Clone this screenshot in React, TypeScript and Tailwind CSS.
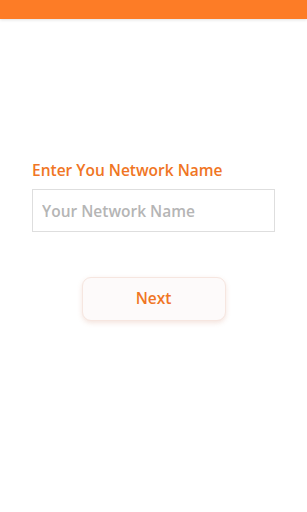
export default function App() {
  return (
    <div className="min-h-[512px] w-full bg-white font-['Open_Sans',sans-serif]">
      <div className="h-[19px] w-full bg-[#fd7c26] shadow-[0_1px_3px_rgba(0,0,0,0.12)]" />
      <div className="px-[32px] pt-[141px]">
        <label className="block text-[15.5px] font-semibold leading-[20px] text-[#f07524]">
          Enter You Network Name
        </label>
        <input
          type="text"
          placeholder="Your Network Name"
          className="mt-[9px] h-[43px] w-full border border-[#dedede] px-[9px] text-[15.5px] font-semibold text-[#333] placeholder:text-[#b5b5b5] outline-none"
        />
      </div>
      <div className="flex justify-center pt-[45px]">
        <button
          type="button"
          className="h-[44px] w-[144px] rounded-[9px] border border-[#f6e6e0] bg-[#fdfafa] text-[15.5px] font-semibold text-[#f07524] shadow-[0_2px_5px_rgba(200,120,90,0.2)]"
        >
          Next
        </button>
      </div>
    </div>
  );
}
